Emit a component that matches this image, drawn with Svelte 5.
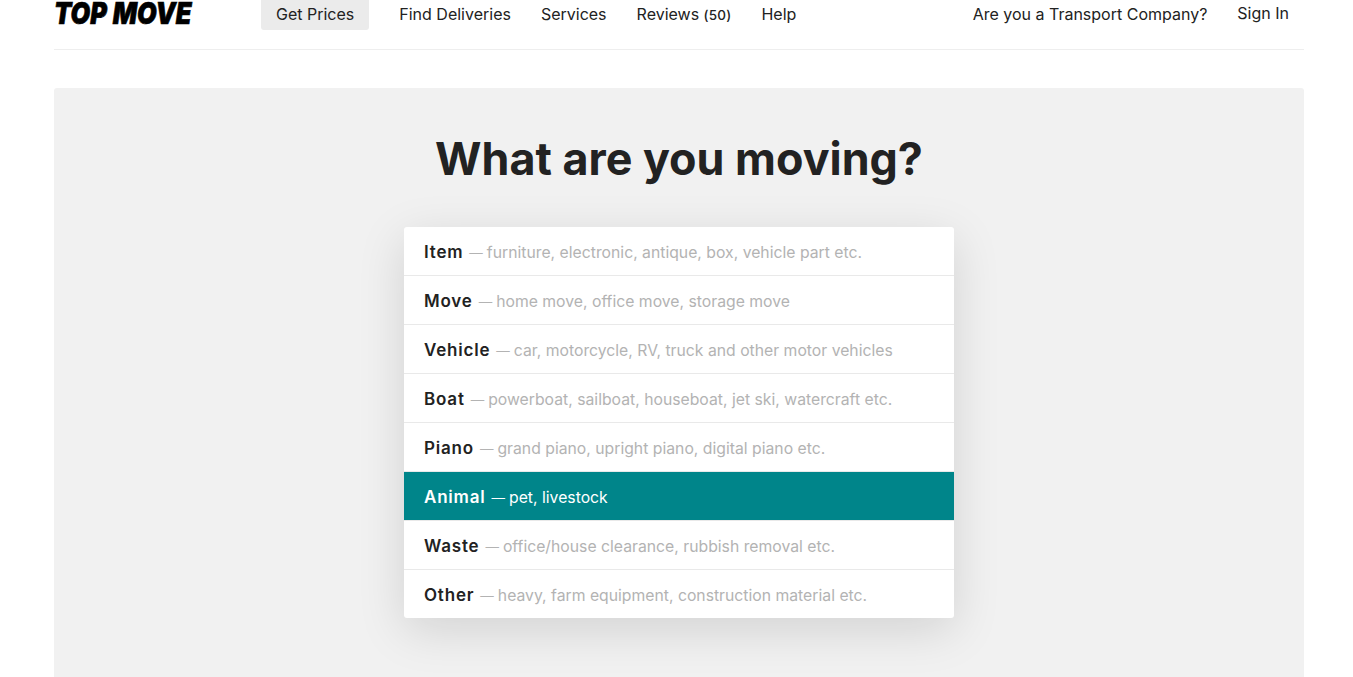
<script>
  const items = [
    { name: 'Item', desc: 'furniture, electronic, antique, box, vehicle part etc.' },
    { name: 'Move', desc: 'home move, office move, storage move' },
    { name: 'Vehicle', desc: 'car, motorcycle, RV, truck and other motor vehicles' },
    { name: 'Boat', desc: 'powerboat, sailboat, houseboat, jet ski, watercraft etc.' },
    { name: 'Piano', desc: 'grand piano, upright piano, digital piano etc.' },
    { name: 'Animal', desc: 'pet, livestock', active: true },
    { name: 'Waste', desc: 'office/house clearance, rubbish removal etc.' },
    { name: 'Other', desc: 'heavy, farm equipment, construction material etc.' }
  ];
  const nav = ['Find Deliveries', 'Services'];
</script>

<div class="page">
  <header class="header">
    <div class="logo-box"><div class="logo">TOP MOVE</div></div>
    <nav class="nav">
      <a class="link current">Get Prices</a>
      {#each nav as n}<a class="link">{n}</a>{/each}
      <a class="link">Reviews <span class="count">(50)</span></a>
      <a class="link">Help</a>
    </nav>
    <div class="right">
      <a class="link">Are you a Transport Company?</a>
      <a class="link signin">Sign In</a>
    </div>
  </header>
  <main class="panel">
    <h1>What are you moving?</h1>
    <ul class="list">
      {#each items as it}
        <li class:active={it.active}><b>{it.name}</b><span class="dash">—</span><span class="desc">{it.desc}</span></li>
      {/each}
    </ul>
  </main>
</div>

<style>
  :global(body) { margin: 0; background: #fff; overflow: hidden; height: 677px; }
  .page {
    margin: 0 49px 0 54px;
    font-family: Inter, "Open Sans", sans-serif;
    color: #222;
    height: 677px;
    overflow: hidden;
  }
  .header {
    display: flex;
    height: 49px;
    border-bottom: 1px solid #eee;
    align-items: flex-start;
  }
  .logo-box { width: 207px; flex: none; height: 27px; }
  .logo {
    line-height: 27px;
    font-size: 30px;
    font-weight: 900;
    font-style: italic;
    color: #000;
    -webkit-text-stroke: 0.7px #000;
    word-spacing: 1px;
    white-space: nowrap;
    transform: scaleX(0.845);
    transform-origin: left top;
  }
  .nav { display: flex; }
  .link {
    display: block;
    padding: 0 15px;
    height: 30px;
    line-height: 29px;
    font-size: 16px;
    font-weight: 400;
    color: #222;
    white-space: nowrap;
  }
  .current { background: #ebebeb; border-radius: 0 0 3px 3px; margin-right: 15px; }
  .count { font-size: 13.5px; font-weight: 500; letter-spacing: 0.2px; }
  .right { margin-left: auto; display: flex; }
  .signin { padding-right: 15px; line-height: 27px; }
  .panel {
    margin-top: 38px;
    height: 640px;
    background: #f1f1f1;
    border-radius: 3px 3px 0 0;
    box-sizing: border-box;
    padding-top: 43px;
    display: flex;
    flex-direction: column;
    align-items: center;
  }
  h1 {
    margin: 0 0 40px;
    font-size: 44.8px;
    line-height: 56px;
    font-weight: 700;
    color: #222;
  }
  .list {
    list-style: none;
    margin: 0;
    padding: 0;
    width: 550px;
    background: #fff;
    border-radius: 3px;
    box-shadow: 0 12px 48px rgba(0,0,0,0.13);
  }
  li {
    height: 49px;
    box-sizing: border-box;
    border-bottom: 1px solid #e9e9e9;
    padding: 0 20px;
    line-height: 50px;
    font-size: 15.75px;
    color: #b3b3b3;
    white-space: nowrap;
  }
  li:last-child { border-bottom: 0; height: 48px; }
  li b {
    font-size: 17px;
    font-weight: 600;
    letter-spacing: 0.8px;
    color: #222;
  }
  .dash { font-size: 13.5px; margin: 0 4px 0 6px; }
  .active { background: #00858a; color: #fff; background-clip: padding-box; }
  .active b { color: #fff; }
</style>
